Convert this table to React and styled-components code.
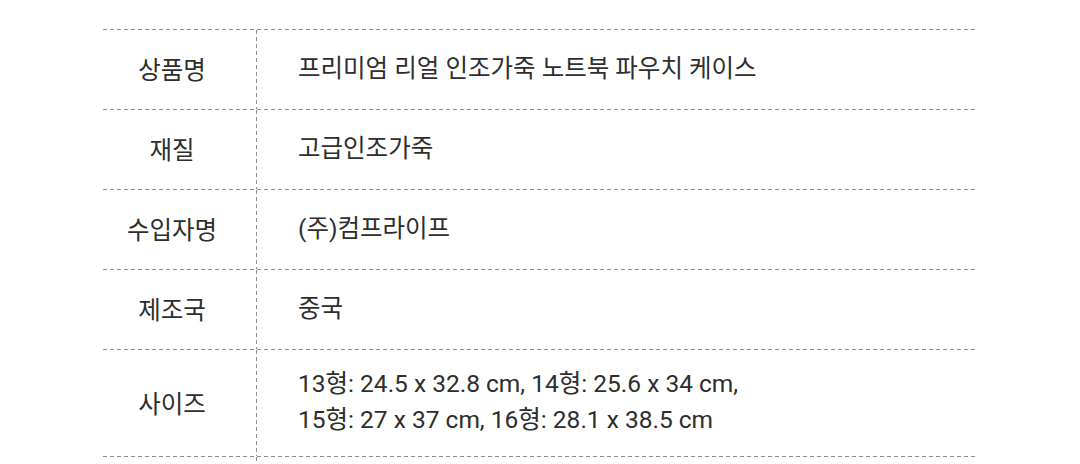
import React from "react";
import styled, { createGlobalStyle } from "styled-components";

const GlobalStyle = createGlobalStyle`
  html, body {
    margin: 0;
    padding: 0;
    background: #fff;
  }
  body {
    font-family: "Roboto", "Noto Sans CJK KR", sans-serif;
    color: #2e2e2e;
  }
`;

const DASH = "#8c8c8c";
const hDash = `repeating-linear-gradient(to right, ${DASH} 0 4px, transparent 4px 7px)`;
const vDash = `repeating-linear-gradient(to bottom, ${DASH} 0 4px, transparent 4px 7px)`;

const rows = [
  { label: "상품명", value: ["프리미엄 리얼 인조가죽 노트북 파우치 케이스"] },
  { label: "재질", value: ["고급인조가죽"] },
  { label: "수입자명", value: ["(주)컴프라이프"] },
  { label: "제조국", value: ["중국"] },
  {
    label: "사이즈",
    value: [
      "13형: 24.5 x 32.8 cm, 14형: 25.6 x 34 cm,",
      "15형: 27 x 37 cm, 16형: 28.1 x 38.5 cm",
    ],
  },
];

const App = () => {
  return (
    <>
      <GlobalStyle />
      <Page>
        <Table>
          {rows.map((row) => (
            <Row key={row.label}>
              <Label>{row.label}</Label>
              <Value>
                {row.value.map((line) => (
                  <Line key={line}>{line}</Line>
                ))}
              </Value>
            </Row>
          ))}
          {/* next row continues below the fold */}
          <Row>
            <Label />
            <Value />
          </Row>
        </Table>
      </Page>
    </>
  );
};

const Page = styled.div`
  padding: 29px 104px 0 103px;
`;

const Table = styled.div`
  display: flex;
  flex-direction: column;
  padding-top: 1px;
  background: ${hDash} top left / 100% 1px no-repeat;
`;

const Row = styled.div`
  display: grid;
  grid-template-columns: 154px 1fr;
  min-height: 79px;
  padding-bottom: 1px;
  background: ${hDash} bottom left / 100% 1px no-repeat;
`;

const Label = styled.div`
  display: flex;
  align-items: center;
  justify-content: center;
  padding: 0 16px 2px 0;
  background: ${vDash} top right / 1px 100% no-repeat;
  font-size: 24.5px;
`;

const Value = styled.div`
  display: flex;
  flex-direction: column;
  justify-content: center;
  padding: 16px 0 18px 41px;
  font-size: 24.5px;
  line-height: 36px;
`;

const Line = styled.div`
  white-space: nowrap;
`;

export default App;
